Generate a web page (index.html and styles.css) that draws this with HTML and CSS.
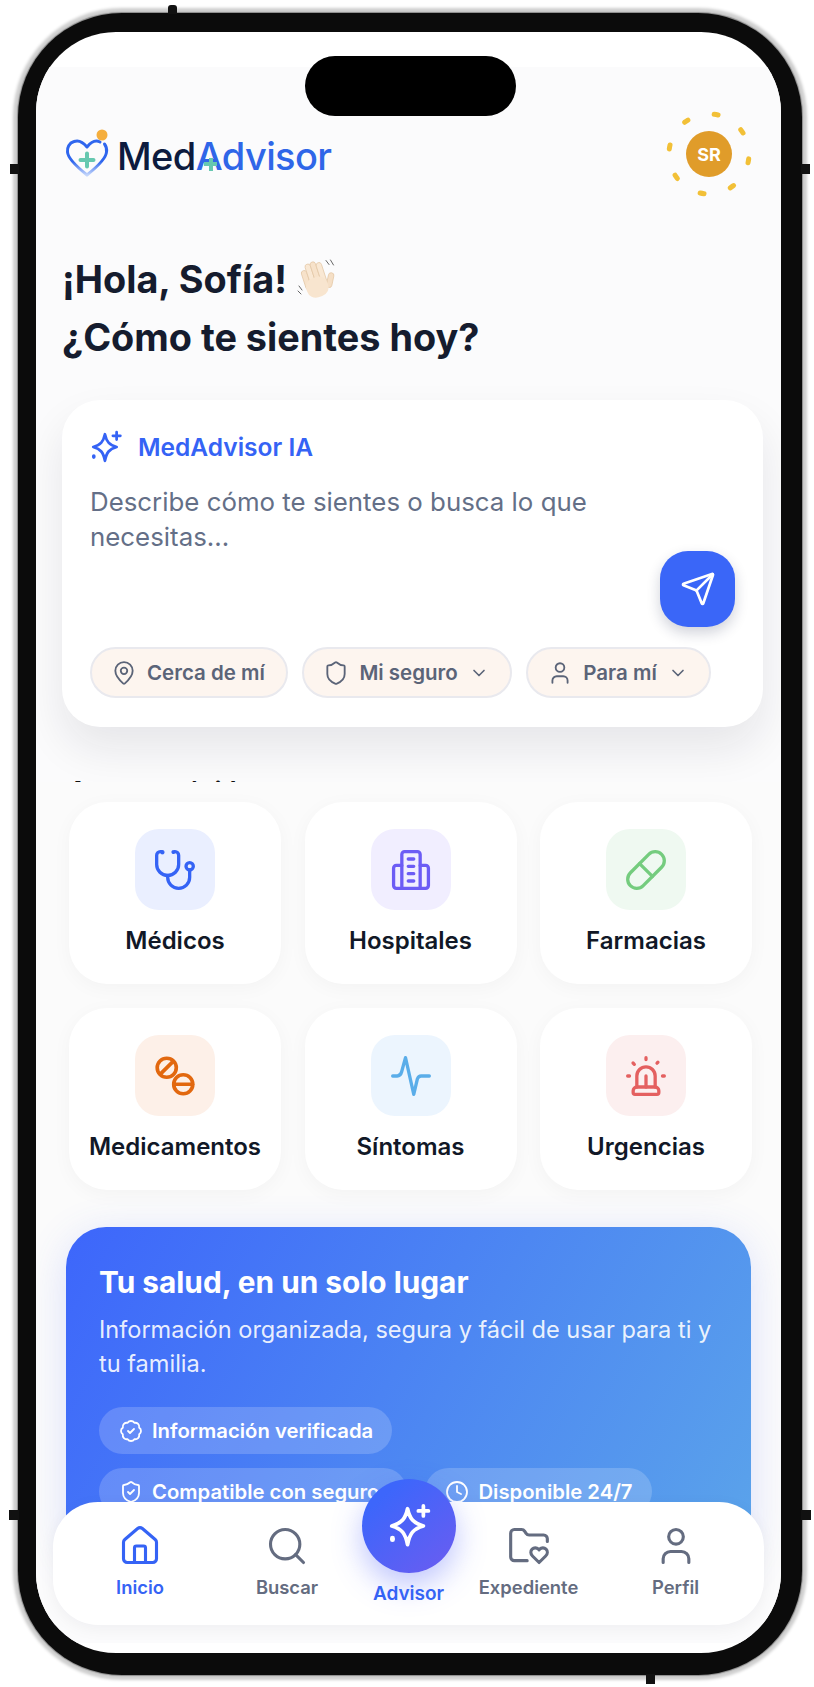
FILE: index.html
```html
<!DOCTYPE html>
<html lang="es">
<head>
  <meta charset="UTF-8" />
  <title>MedAdvisor</title>
  <link rel="stylesheet" href="styles.css">
</head>
<body>
  <div class="phone">
    <span class="side-btn btn-top"></span>
    <span class="side-btn btn-left"></span>
    <span class="side-btn btn-right"></span>
    <span class="side-btn btn-left-low"></span>
    <span class="side-btn btn-right-low"></span>
    <span class="side-btn btn-bottom"></span>

    <div class="screen">
      <div class="notch"></div>

      <div class="content">
        <header class="top-bar">
          <div class="logo">
            <svg class="logo-heart" viewBox="0 0 46 50" fill="none">
              <defs>
                <linearGradient id="heartGrad" x1="0" y1="0" x2="0" y2="1">
                  <stop offset="0.6" stop-color="#2f66ee"/>
                  <stop offset="1" stop-color="#c4d6fb"/>
                </linearGradient>
              </defs>
              <path d="M35 14C31 12 26 14 22 19 18 14 13 12 9 13.500 4 15 2 20 2.500 24 3 31 12 39 22 47 32 39 41 31 41.500 24 42 21 41 18 39.500 16" stroke="url(#heartGrad)" stroke-width="3" stroke-linecap="round" stroke-linejoin="round"/>
              <path d="M22 25.500v13M15.500 32h13" stroke="#66c8b0" stroke-width="4" stroke-linecap="round"/>
              <circle cx="37" cy="7" r="5.500" fill="#f5ae3d"/>
            </svg>
            <span class="logo-text">Med<span class="logo-blue">Advisor</span><span class="logo-plus"></span></span>
          </div>
          <div class="avatar">
            <svg class="avatar-ring" viewBox="0 0 96 96" fill="none">
              <circle cx="48" cy="48" r="40" stroke="#f2c037" stroke-width="5" stroke-linecap="round" stroke-dasharray="4 27.416" transform="rotate(7 48 48)"/>
            </svg>
            <span class="avatar-circle">SR</span>
          </div>
        </header>

        <h1 class="greeting">
          <span class="greeting-line">¡Hola, Sofía!
            <svg class="wave" viewBox="0 0 40 40" fill="none">
              <g transform="rotate(-18 20 24)" stroke="#e3c6a4" stroke-width="0.700">
                <rect x="29" y="17" width="5.500" height="15" rx="2.700" transform="rotate(30 31 28)" fill="#f5dfc6"/>
                <rect x="8" y="8" width="5.500" height="20" rx="2.700" fill="#f7e2ca"/>
                <rect x="13.500" y="3" width="5.500" height="24" rx="2.700" fill="#f9e8d4"/>
                <rect x="19" y="2.500" width="5.500" height="24" rx="2.700" fill="#f7e2ca"/>
                <rect x="24.500" y="5" width="5.500" height="22" rx="2.700" fill="#f9e8d4"/>
                <rect x="8" y="18" width="22" height="20" rx="9" fill="#f8e5cf" stroke="none"/>
              </g>
              <path d="M29 1.500l3 4M33.500 1l3 5M2 27l3 4M1 32l3 3" stroke="#666" stroke-width="1" stroke-linecap="round"/>
            </svg>
          </span>
          <span class="greeting-line">¿Cómo te sientes hoy?</span>
        </h1>

        <section class="ai-card">
          <div class="ai-head">
            <svg class="ai-spark" viewBox="0 0 32 32" fill="none" stroke="currentColor" stroke-width="2.600" stroke-linecap="round" stroke-linejoin="round">
              <path d="M15 4c1.500 7 4 10 11 12-7 2-9.500 5-11 13-1.500-8-4-11-11-13 7-2 9.500-5 11-12z"/>
              <path d="M26 2v7M22.500 5.500h7"/>
              <path d="M4.500 24.500v1" stroke-width="3.400"/>
            </svg>
            <span>MedAdvisor IA</span>
          </div>
          <div class="ai-body">
            <p class="ai-placeholder">Describe cómo te sientes o busca lo que necesitas...</p>
            <button class="send-btn">
              <svg viewBox="0 0 24 24" fill="none" stroke="currentColor" stroke-width="1.800" stroke-linecap="round" stroke-linejoin="round">
                <path d="M14.536 21.686a.5.5 0 0 0 .937-.024l6.500-19a.496.496 0 0 0-.635-.635l-19 6.500a.5.5 0 0 0-.024.937l7.930 3.180a2 2 0 0 1 1.112 1.110z"/>
                <path d="m21.854 2.147-10.940 10.939"/>
              </svg>
            </button>
          </div>
          <div class="filters">
            <div class="filter">
              <svg class="filter-icon" viewBox="0 0 24 24" fill="none" stroke="currentColor" stroke-width="1.700" stroke-linecap="round" stroke-linejoin="round">
                <path d="M20 10c0 4.993-5.539 10.193-7.399 11.799a1 1 0 0 1-1.202 0C9.539 20.193 4 14.993 4 10a8 8 0 0 1 16 0"/>
                <circle cx="12" cy="10" r="3"/>
              </svg>
              Cerca de mí
            </div>
            <div class="filter">
              <svg class="filter-icon" viewBox="0 0 24 24" fill="none" stroke="currentColor" stroke-width="1.700" stroke-linecap="round" stroke-linejoin="round">
                <path d="M20 13c0 5-3.500 7.500-7.660 8.950a1 1 0 0 1-.67-.01C7.500 20.500 4 18 4 13V6a1 1 0 0 1 1-1c2 0 4.500-1.200 6.240-2.720a1.170 1.170 0 0 1 1.520 0C14.510 3.810 17 5 19 5a1 1 0 0 1 1 1z"/>
              </svg>
              Mi seguro
              <svg class="chevron" viewBox="0 0 24 24" fill="none" stroke="currentColor" stroke-width="2" stroke-linecap="round" stroke-linejoin="round"><path d="m6 9 6 6 6-6"/></svg>
            </div>
            <div class="filter">
              <svg class="filter-icon" viewBox="0 0 24 24" fill="none" stroke="currentColor" stroke-width="1.700" stroke-linecap="round" stroke-linejoin="round">
                <path d="M19 21v-2a4 4 0 0 0-4-4H9a4 4 0 0 0-4 4v2"/>
                <circle cx="12" cy="7" r="4"/>
              </svg>
              Para mí
              <svg class="chevron" viewBox="0 0 24 24" fill="none" stroke="currentColor" stroke-width="2" stroke-linecap="round" stroke-linejoin="round"><path d="m6 9 6 6 6-6"/></svg>
            </div>
          </div>
        </section>

        <h2 class="section-title">Accesos rápidos</h2>

        <section class="shortcuts">
          <div class="grid">
            <div class="tile">
              <span class="tile-icon tile-blue">
                <svg viewBox="0 0 24 24" fill="none" stroke="currentColor" stroke-width="1.800" stroke-linecap="round" stroke-linejoin="round">
                  <path d="M4.800 2.300A.3.3 0 1 0 5 2H4a2 2 0 0 0-2 2v5a6 6 0 0 0 6 6 6 6 0 0 0 6-6V4a2 2 0 0 0-2-2h-1a.2.2 0 1 0 .3.3"/>
                  <path d="M8 15v1a6 6 0 0 0 6 6 6 6 0 0 0 6-6v-4"/>
                  <circle cx="20" cy="10" r="2"/>
                </svg>
              </span>
              <span class="tile-label">Médicos</span>
            </div>
            <div class="tile">
              <span class="tile-icon tile-purple">
                <svg viewBox="0 0 24 24" fill="none" stroke="currentColor" stroke-width="1.800" stroke-linecap="round" stroke-linejoin="round">
                  <path d="M7 22V3.500A1.500 1.500 0 0 1 8.500 2h7A1.500 1.500 0 0 1 17 3.500V22"/>
                  <path d="M7 9.500H4A1.500 1.500 0 0 0 2.500 11v9.500A1.500 1.500 0 0 0 4 22h16a1.500 1.500 0 0 0 1.500-1.500V11A1.500 1.500 0 0 0 20 9.500h-3"/>
                  <path d="M10.500 6h3M10.500 10h3M10.500 14h3M10.500 18h3"/>
                </svg>
              </span>
              <span class="tile-label">Hospitales</span>
            </div>
            <div class="tile">
              <span class="tile-icon tile-green">
                <svg viewBox="0 0 24 24" fill="none" stroke="currentColor" stroke-width="1.800" stroke-linecap="round" stroke-linejoin="round">
                  <path d="m10.500 20.500 10-10a4.950 4.950 0 1 0-7-7l-10 10a4.950 4.950 0 1 0 7 7Z"/>
                  <path d="m8.500 8.500 7 7"/>
                </svg>
              </span>
              <span class="tile-label">Farmacias</span>
            </div>
            <div class="tile">
              <span class="tile-icon tile-orange">
                <svg viewBox="0 0 24 24" fill="none" stroke="currentColor" stroke-width="2" stroke-linecap="round" stroke-linejoin="round">
                  <circle cx="7.500" cy="7.500" r="5.200"/>
                  <path d="m4 11 7-7"/>
                  <circle cx="16.500" cy="16.500" r="5.200"/>
                  <path d="M11.500 16.500h10"/>
                </svg>
              </span>
              <span class="tile-label">Medicamentos</span>
            </div>
            <div class="tile">
              <span class="tile-icon tile-sky">
                <svg viewBox="0 0 24 24" fill="none" stroke="currentColor" stroke-width="1.800" stroke-linecap="round" stroke-linejoin="round">
                  <path d="M2 12h2.500c1.500 0 2-.8 2.400-2.300L9 2l4.500 20 2-8.500c.4-1 1-1.500 2-1.500H22"/>
                </svg>
              </span>
              <span class="tile-label">Síntomas</span>
            </div>
            <div class="tile">
              <span class="tile-icon tile-red">
                <svg viewBox="0 0 24 24" fill="none" stroke="currentColor" stroke-width="1.800" stroke-linecap="round" stroke-linejoin="round">
                  <path d="M7 18v-6a5 5 0 1 1 10 0v6"/>
                  <path d="M5 21a1 1 0 0 0 1 1h12a1 1 0 0 0 1-1v-1a2 2 0 0 0-2-2H7a2 2 0 0 0-2 2z"/>
                  <path d="M21 12h1M18.500 4.500 18 5M2 12h1M12 2v1M4.929 4.929l.707.707M12 12v6"/>
                </svg>
              </span>
              <span class="tile-label">Urgencias</span>
            </div>
          </div>

          <div class="banner">
            <h3 class="banner-title">Tu salud, en un solo lugar</h3>
            <p class="banner-text">Información organizada, segura y fácil de usar para ti y tu familia.</p>
            <div class="badge-row">
              <span class="badge">
                <svg viewBox="0 0 24 24" fill="none" stroke="currentColor" stroke-width="1.800" stroke-linecap="round" stroke-linejoin="round">
                  <path d="M3.850 8.620a4 4 0 0 1 4.780-4.770 4 4 0 0 1 6.740 0 4 4 0 0 1 4.780 4.780 4 4 0 0 1 0 6.740 4 4 0 0 1-4.770 4.780 4 4 0 0 1-6.750 0 4 4 0 0 1-4.780-4.770 4 4 0 0 1 0-6.760Z"/>
                  <path d="m9 12 2 2 4-4"/>
                </svg>
                Información verificada
              </span>
            </div>
            <div class="badge-row">
              <span class="badge badge-wide">
                <svg viewBox="0 0 24 24" fill="none" stroke="currentColor" stroke-width="1.800" stroke-linecap="round" stroke-linejoin="round">
                  <path d="M20 13c0 5-3.500 7.500-7.660 8.950a1 1 0 0 1-.67-.01C7.500 20.500 4 18 4 13V6a1 1 0 0 1 1-1c2 0 4.500-1.200 6.240-2.720a1.170 1.170 0 0 1 1.520 0C14.510 3.810 17 5 19 5a1 1 0 0 1 1 1z"/>
                  <path d="m9 12 2 2 4-4"/>
                </svg>
                Compatible con seguro
              </span>
              <span class="badge">
                <svg viewBox="0 0 24 24" fill="none" stroke="currentColor" stroke-width="1.800" stroke-linecap="round" stroke-linejoin="round">
                  <circle cx="12" cy="12" r="10"/>
                  <path d="M12 6v6l4 2"/>
                </svg>
                Disponible 24/7
              </span>
            </div>
          </div>
        </section>
      </div>

      <nav class="bottom-nav">
        <a class="nav-item active">
          <svg viewBox="0 0 24 24" fill="none" stroke="currentColor" stroke-width="1.700" stroke-linecap="round" stroke-linejoin="round">
            <path d="M15 21v-8a1 1 0 0 0-1-1h-4a1 1 0 0 0-1 1v8"/>
            <path d="M3 10a2 2 0 0 1 .709-1.528l7-5.999a2 2 0 0 1 2.582 0l7 5.999A2 2 0 0 1 21 10v9a2 2 0 0 1-2 2H5a2 2 0 0 1-2-2z"/>
          </svg>
          <span>Inicio</span>
        </a>
        <a class="nav-item">
          <svg viewBox="0 0 24 24" fill="none" stroke="currentColor" stroke-width="1.700" stroke-linecap="round" stroke-linejoin="round">
            <circle cx="11" cy="11" r="8"/>
            <path d="m21 21-4.300-4.300"/>
          </svg>
          <span>Buscar</span>
        </a>
        <a class="nav-item nav-advisor active">
          <span class="nav-fab">
            <svg viewBox="0 0 32 32" fill="none" stroke="currentColor" stroke-width="2.600" stroke-linecap="round" stroke-linejoin="round">
              <path d="M15 4c1.500 7 4 10 11 12-7 2-9.500 5-11 13-1.500-8-4-11-11-13 7-2 9.500-5 11-12z"/>
              <path d="M26 2v7M22.500 5.500h7"/>
              <path d="M4.500 24.500v1" stroke-width="3.400"/>
            </svg>
          </span>
          <span>Advisor</span>
        </a>
        <a class="nav-item">
          <svg viewBox="0 0 24 24" fill="none" stroke="currentColor" stroke-width="1.700" stroke-linecap="round" stroke-linejoin="round">
            <path d="M11 20H4a2 2 0 0 1-2-2V5a2 2 0 0 1 2-2h3.900a2 2 0 0 1 1.690.9l.81 1.200a2 2 0 0 0 1.670.9H20a2 2 0 0 1 2 2v1.500"/>
            <path d="M13.900 17.450c-1.200-1.200-1.140-2.800-.2-3.730a2.430 2.430 0 0 1 3.440 0l.36.34.34-.34a2.430 2.430 0 0 1 3.450-.01c.95.95 1 2.530-.2 3.740L17.500 21Z"/>
          </svg>
          <span>Expediente</span>
        </a>
        <a class="nav-item">
          <svg viewBox="0 0 24 24" fill="none" stroke="currentColor" stroke-width="1.700" stroke-linecap="round" stroke-linejoin="round">
            <path d="M19 21v-2a4 4 0 0 0-4-4H9a4 4 0 0 0-4 4v2"/>
            <circle cx="12" cy="7" r="4"/>
          </svg>
          <span>Perfil</span>
        </a>
      </nav>
    </div>
  </div>
</body>
</html>
```

FILE: styles.css
```css
* {
  box-sizing: border-box;
}

html, body {
  height: 1687px;
}

body {
  margin: 0;
  background: #fff;
  font-family: Inter, "Liberation Sans", sans-serif;
  overflow: hidden;
}

/* device frame */
.phone {
  position: relative;
  width: 784px;
  height: 1662px;
  margin: 13px 0 0 18px;
  background: #0b0b0b;
  border-radius: 104px;
  padding: 19px 21px 22px 18px;
  box-shadow: 0 0 1px 1px #8a8a8a, 0 0 3px 5px #cfcfcf;
}

.side-btn {
  position: absolute;
  background: #111;
}

.btn-top { top: -8px; left: 150px; width: 9px; height: 9px; border-radius: 3px 3px 0 0; }
.btn-left { top: 151px; left: -8px; width: 9px; height: 10px; }
.btn-right { top: 151px; right: -8px; width: 9px; height: 10px; }
.btn-left-low { top: 1497px; left: -9px; width: 10px; height: 10px; }
.btn-right-low { top: 1497px; right: -9px; width: 10px; height: 10px; }
.btn-bottom { bottom: -9px; left: 628px; width: 9px; height: 10px; }

.screen {
  position: relative;
  height: 100%;
  background: #fff;
  border-radius: 80px;
  overflow: hidden;
  padding: 35px 0 10px;
}

.notch {
  position: absolute;
  top: 24px;
  left: 269px;
  width: 211px;
  height: 60px;
  background: #000;
  border-radius: 30px;
  z-index: 3;
}

.content {
  height: 100%;
  background: #fbfbfc;
  overflow: hidden;
}

/* header */
.top-bar {
  display: flex;
  justify-content: space-between;
  align-items: center;
  height: 96px;
  margin-top: 39px;
  padding: 0 24px 0 29px;
}

.logo {
  display: flex;
  align-items: center;
  gap: 6px;
}

.logo-heart {
  width: 46px;
  height: 50px;
  margin-top: -2px;
}

.logo-text {
  position: relative;
  margin-top: 3px;
  font-size: 38px;
  font-weight: 500;
  letter-spacing: -0.6px;
  color: #0d1b3e;
}

.logo-blue {
  color: #2f66e8;
}

/* the little teal cross on the A */
.logo-plus {
  position: absolute;
  left: 87px;
  top: 25px;
  width: 13px;
  height: 13px;
  background:
    linear-gradient(#66c8b0, #66c8b0) center / 100% 4px no-repeat,
    linear-gradient(#66c8b0, #66c8b0) center / 4px 100% no-repeat;
}

.avatar {
  position: relative;
  display: flex;
  align-items: center;
  justify-content: center;
  width: 96px;
  height: 96px;
}

.avatar-ring {
  position: absolute;
  inset: 0;
}

.avatar-circle {
  display: flex;
  align-items: center;
  justify-content: center;
  width: 46px;
  height: 46px;
  border-radius: 50%;
  background: #e09c2a;
  color: #fff;
  font-size: 18px;
  font-weight: 700;
}

/* greeting */
.greeting {
  margin: 48px 0 0 26px;
  font-size: 37.800px;
  font-weight: 700;
  line-height: 58px;
  color: #151c2e;
}

.greeting-line {
  display: flex;
  align-items: center;
  gap: 10px;
}

.wave {
  width: 40px;
  height: 40px;
}

/* AI card */
.ai-card {
  width: 701px;
  height: 327px;
  margin: 34px 0 0 26px;
  padding: 30px 28px 0;
  background: #fff;
  border-radius: 38px;
  box-shadow: 0 22px 44px rgba(20, 24, 40, 0.09);
}

.ai-head {
  display: flex;
  align-items: center;
  gap: 15px;
  color: #3563f5;
  font-size: 24.500px;
  font-weight: 600;
}

.ai-spark {
  width: 34px;
  height: 34px;
  margin-left: -1px;
}

.ai-body {
  display: flex;
  align-items: flex-end;
  height: 143px;
  margin-top: 20px;
}

.ai-placeholder {
  flex: 1;
  align-self: flex-start;
  margin: 0;
  font-size: 25.850px;
  line-height: 35px;
  color: #646f87;
}

.send-btn {
  display: flex;
  align-items: center;
  justify-content: center;
  width: 75px;
  height: 76px;
  padding: 0;
  border: none;
  border-radius: 28px;
  background: #3a66f8;
  color: #fff;
  box-shadow: 0 6px 14px rgba(20, 30, 70, 0.2);
}

.send-btn svg {
  width: 36px;
  height: 36px;
}

.filters {
  display: flex;
  gap: 14.500px;
  margin-top: 20px;
}

.filter {
  display: flex;
  align-items: center;
  height: 51px;
  padding: 0 21px 0 19px;
  background: #fdf5ef;
  border: 2px solid #e9e9ee;
  border-radius: 26px;
  font-size: 20.500px;
  font-weight: 600;
  color: #5b6478;
}

.filter-icon {
  width: 26px;
  height: 26px;
  margin-right: 10px;
}

.chevron {
  width: 20px;
  height: 20px;
  margin-left: 11px;
}

/* only the very top of this heading peeks out above the tiles */
.section-title {
  height: 3px;
  margin: 52px 0 0 33px;
  overflow: hidden;
  font-size: 24px;
  font-weight: 700;
  line-height: 24px;
  color: #111;
}

.shortcuts {
  position: relative;
  padding: 20px 0 0;
  background: #fbfbfb;
}

.grid {
  display: grid;
  grid-template-columns: repeat(3, 212px);
  gap: 24px 23.500px;
  margin-left: 33px;
}

.tile {
  display: flex;
  flex-direction: column;
  align-items: center;
  height: 182px;
  padding-top: 27px;
  background: #fff;
  border-radius: 38px;
  box-shadow: 0 4px 20px rgba(20, 24, 40, 0.035);
}

.tile-icon {
  display: flex;
  align-items: center;
  justify-content: center;
  width: 80px;
  height: 81px;
  border-radius: 24px;
}

.tile-icon svg {
  width: 44px;
  height: 44px;
}

.tile-blue { background: #eaefff; color: #3563f5; }
.tile-purple { background: #f1eeff; color: #6c5cf5; }
.tile-green { background: #eff9f1; color: #74cc7e; }
.tile-orange { background: #fdf0e8; color: #e2680f; }
.tile-sky { background: #ecf5fe; color: #5aade9; }
.tile-red { background: #fcefef; color: #e46060; }

.tile-label {
  margin-top: 16px;
  font-size: 24px;
  font-weight: 600;
  color: #111827;
}

/* promo banner, runs under the nav */
.banner {
  width: 685px;
  height: 340px;
  margin: 37px 0 0 30px;
  padding: 36px 33px 0;
  background: linear-gradient(120deg, #3d66fb 0%, #5ba4ea 100%);
  border-radius: 40px;
  box-shadow: 0 8px 40px rgba(70, 100, 250, 0.18);
  color: #fff;
}

.banner-title {
  margin: 0;
  font-size: 29.800px;
  font-weight: 700;
  line-height: 38px;
}

.banner-text {
  margin: 12px 0 27px;
  font-size: 23.550px;
  line-height: 33.500px;
  color: rgba(255, 255, 255, 0.9);
}

.badge-row {
  display: flex;
  gap: 18px;
  margin-bottom: 14px;
}

.badge {
  display: flex;
  align-items: center;
  gap: 9px;
  height: 47px;
  padding: 0 19px 0 20px;
  background: rgba(255, 255, 255, 0.18);
  border-radius: 24px;
  font-size: 20.300px;
  font-weight: 600;
}

.badge svg {
  width: 24px;
  height: 24px;
}

.badge-wide {
  padding-right: 28px;
}

/* bottom nav floats over the content */
.bottom-nav {
  position: absolute;
  left: 17px;
  bottom: 28px;
  display: grid;
  grid-template-columns: 174px 120px 123px 117px 177px;
  width: 711px;
  height: 123px;
  background: #fff;
  border-radius: 45px;
  box-shadow: 0 4px 16px rgba(20, 24, 40, 0.05);
  z-index: 2;
}

.nav-item {
  display: flex;
  flex-direction: column;
  align-items: center;
  padding-top: 22px;
  color: #646c80;
  font-size: 18.400px;
  font-weight: 600;
  line-height: 22px;
}

.nav-item svg {
  width: 44px;
  height: 44px;
  margin-bottom: 8px;
}

.nav-item.active {
  color: #3563f5;
}

.nav-advisor {
  padding-top: 0;
  font-size: 19px;
}

.nav-fab {
  display: flex;
  align-items: center;
  justify-content: center;
  width: 94px;
  height: 94px;
  margin: -23px 0 10px;
  border-radius: 50%;
  background: linear-gradient(140deg, #3d66fb 20%, #6c5cf0 100%);
  color: #fff;
  box-shadow: 0 12px 30px rgba(70, 90, 250, 0.35);
}

.nav-fab svg {
  margin: 0;
  width: 46px;
  height: 46px;
}
```
